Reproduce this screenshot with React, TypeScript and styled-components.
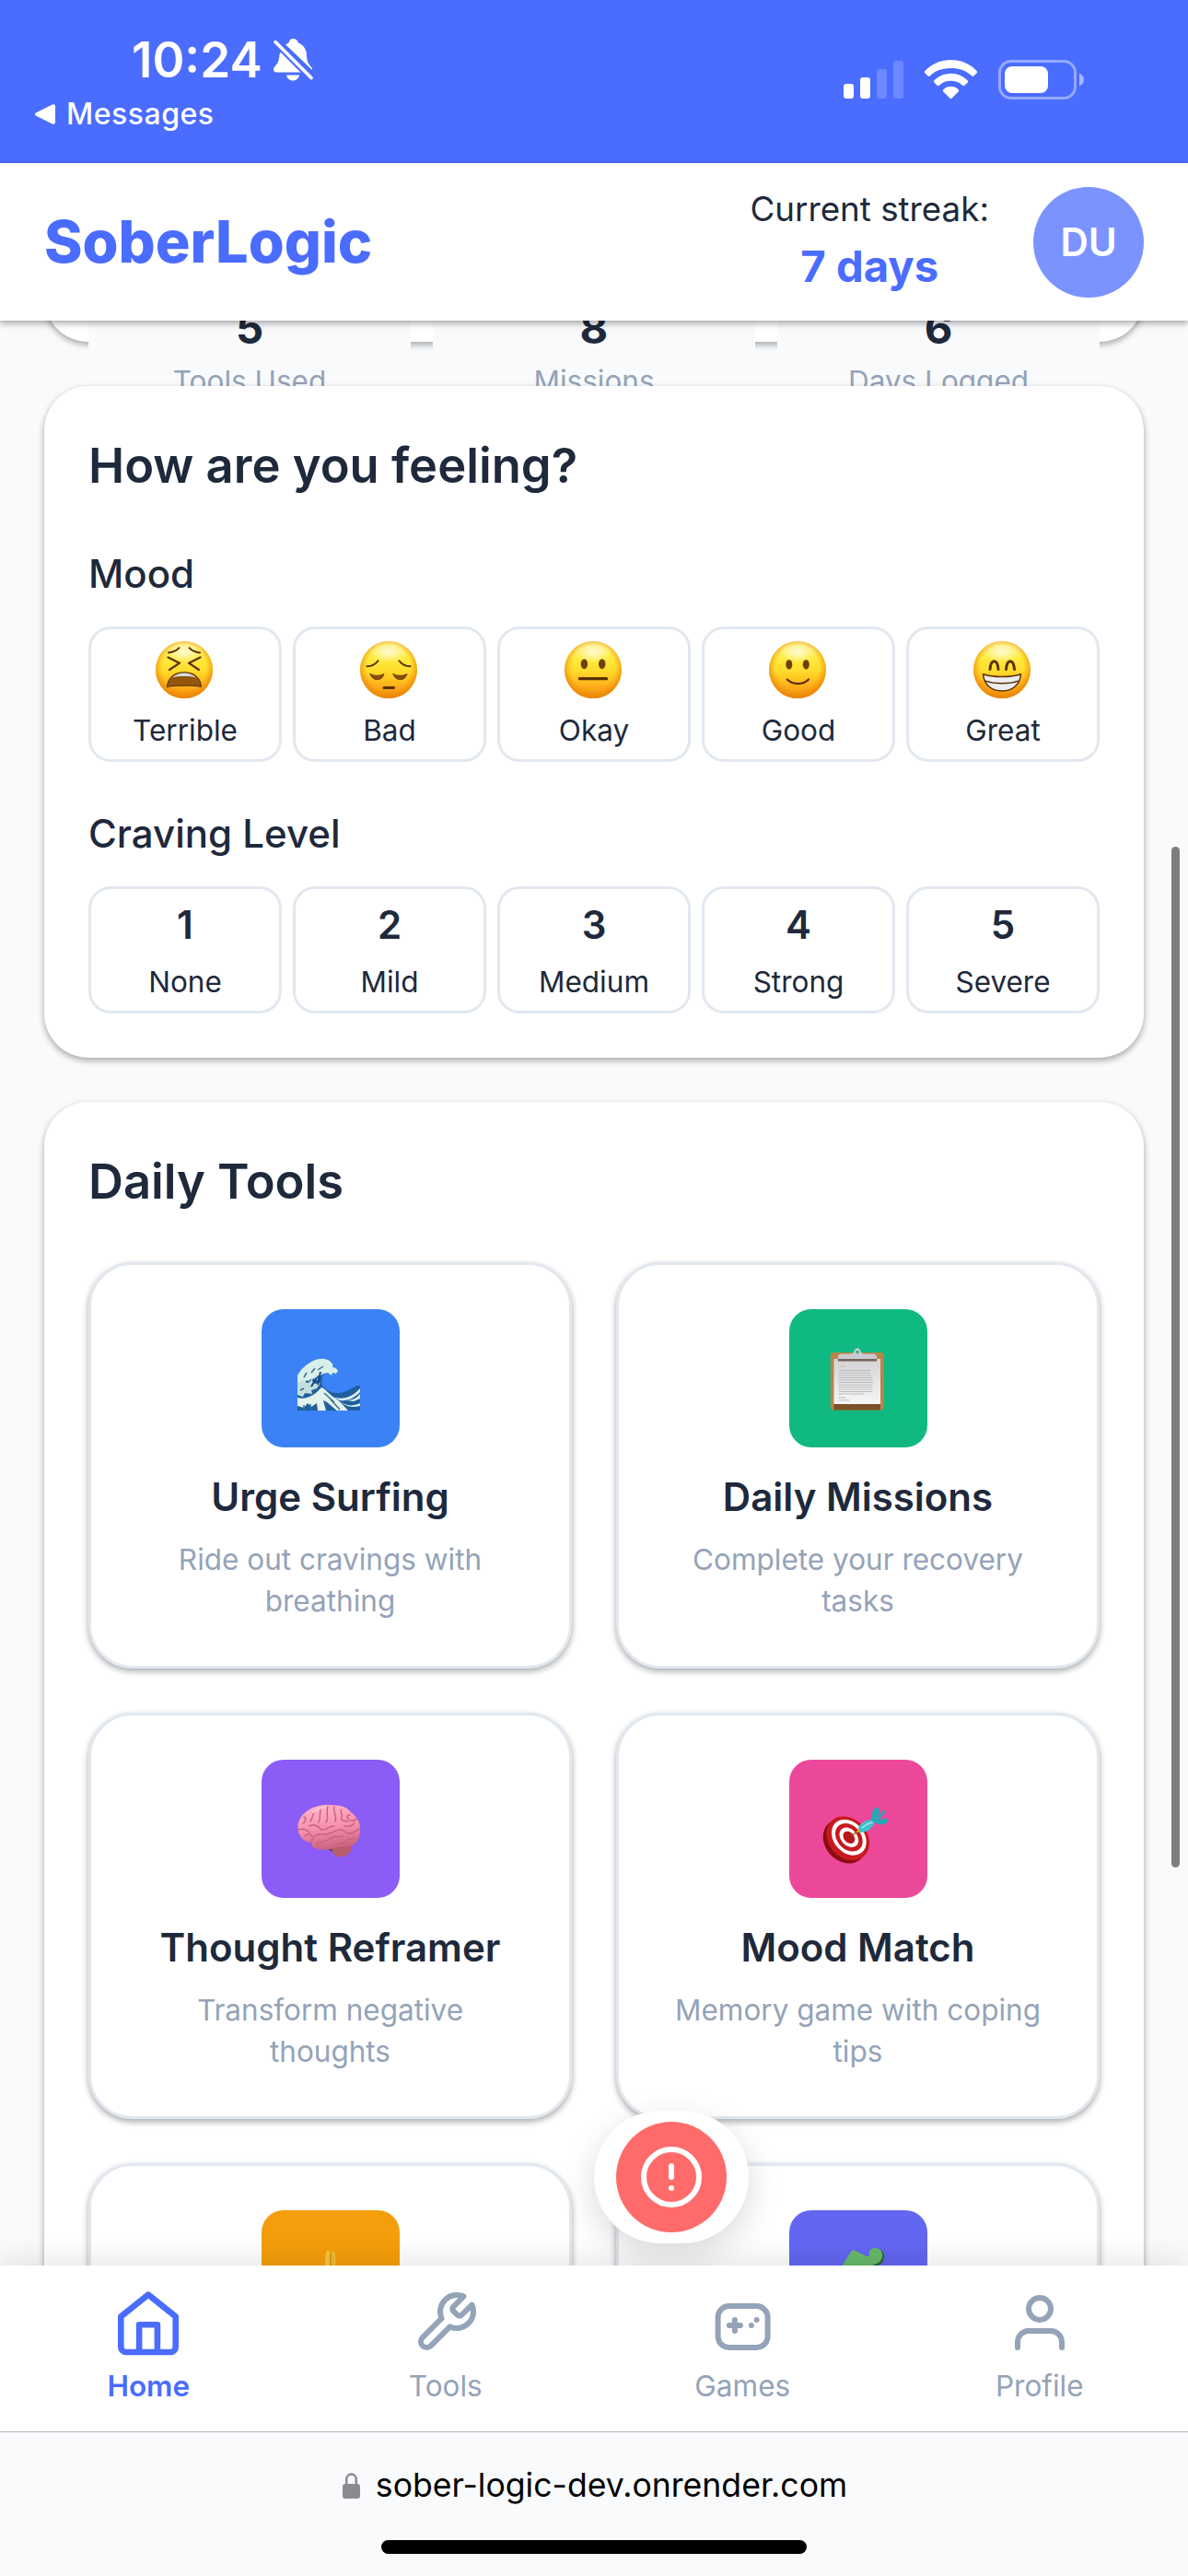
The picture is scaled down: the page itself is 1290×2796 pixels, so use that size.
import React from "react";
import styled, { createGlobalStyle } from "styled-components";
import { CircleAlert } from "lucide-react";

const ink = "#1e293b";
const muted = "#94a3b8";
const primary = "#4a6cff";
const line = "#e2e8f0";
const page = "#f8fafc";
const lift = "0 3px 9px rgba(0,0,0,0.12), 0 3px 6px rgba(0,0,0,0.24)";

const GlobalStyle = createGlobalStyle`
  * { box-sizing: border-box; }
  body { margin: 0; background: ${page}; }
`;

const Screen = styled.div`
  width: 1290px;
  height: 2796px;
  display: flex;
  flex-direction: column;
  overflow: hidden;
  position: relative;
  background: ${page};
  color: ${ink};
  font-family: Inter, "Liberation Sans", sans-serif;
`;

/* ---------- system status bar ---------- */

const StatusBar = styled.div`
  height: 177px;
  flex: none;
  display: flex;
  justify-content: space-between;
  background: ${primary};
  color: #fff;
`;

const StatusLeft = styled.div`
  padding: 33px 0 0 38px;
`;

const ClockRow = styled.div`
  display: flex;
  align-items: center;
  gap: 12px;
  height: 64px;
  padding-left: 105px;
`;

const Clock = styled.span`
  font-size: 53px;
  font-weight: 600;
  line-height: 64px;
`;

const BackRow = styled.div`
  display: flex;
  align-items: center;
  gap: 11px;
  height: 40px;
  margin-top: 7px;
  font-size: 32px;
  font-weight: 500;
  line-height: 40px;
  letter-spacing: 0.5px;
`;

const StatusRight = styled.div`
  display: flex;
  align-items: flex-start;
  padding: 65px 113px 0 0;
`;

/* ---------- app header ---------- */

const Header = styled.header`
  height: 171px;
  flex: none;
  position: relative;
  z-index: 2;
  display: flex;
  align-items: center;
  padding: 0 48px;
  background: #fff;
  box-shadow: ${lift};
`;

const Brand = styled.h1`
  margin: 0 auto 0 0;
  padding-bottom: 1px;
  color: ${primary};
  font-size: 63px;
  line-height: 80px;
  font-weight: 800;
`;

const Streak = styled.div`
  display: flex;
  flex-direction: column;
  align-items: center;
  margin-right: 48px;
  padding-bottom: 3px;
`;

const StreakLabel = styled.span`
  font-size: 36.75px;
  line-height: 56px;
`;

const StreakValue = styled.span`
  color: ${primary};
  font-size: 47.25px;
  font-weight: 700;
  line-height: 68px;
`;

const Avatar = styled.div`
  width: 120px;
  height: 120px;
  border-radius: 50%;
  display: grid;
  place-items: center;
  background: #7b93ff;
  color: #fff;
  font-size: 42px;
  font-weight: 600;
`;

/* ---------- scrolling content ---------- */

const Main = styled.main`
  flex: 1;
  min-height: 0;
  overflow: hidden;
  display: flex;
  flex-direction: column;
  gap: 48px;
  padding: 0 48px;
`;

const Card = styled.section`
  flex: none;
  padding: 48px;
  border-radius: 48px;
  background: #fff;
  box-shadow: ${lift};
`;

const StatsCard = styled(Card)`
  height: 240px;
  margin-top: -217px;
  display: grid;
  grid-template-columns: repeat(3, 1fr);
  gap: 24px;
`;

const Stat = styled.div`
  height: 300px;
  padding-top: 144px;
  display: flex;
  flex-direction: column;
  align-items: center;
  background: ${page};
`;

const StatNumber = styled.span`
  font-size: 47.25px;
  font-weight: 700;
  line-height: 66px;
`;

const StatLabel = styled.span`
  margin-top: 2px;
  color: ${muted};
  font-size: 31.5px;
  line-height: 46px;
`;

const CardTitle = styled.h2`
  margin: 0 0 49px;
  font-size: 52.5px;
  font-weight: 600;
  line-height: 77px;
`;

const FieldLabel = styled.h3<{ $spaced?: boolean }>`
  margin: ${(p) => (p.$spaced ? "48px" : "0")} 0 27px;
  font-size: 42px;
  font-weight: 500;
  line-height: 60px;
`;

const Options = styled.div`
  display: grid;
  grid-template-columns: repeat(5, 1fr);
  gap: 12px;
`;

const Option = styled.button<{ $height: number }>`
  height: ${(p) => p.$height}px;
  padding: 13px 0 0;
  border: 3px solid ${line};
  border-radius: 24px;
  display: flex;
  flex-direction: column;
  align-items: center;
  background: #fff;
  color: ${ink};
  font-family: inherit;
`;

const OptionNumber = styled.span`
  font-size: 42px;
  font-weight: 600;
  line-height: 52px;
`;

const OptionLabel = styled.span<{ $gap: number }>`
  margin-top: ${(p) => p.$gap}px;
  font-size: 31.5px;
  line-height: 45px;
`;

const ToolGrid = styled.div`
  display: grid;
  grid-template-columns: repeat(2, 1fr);
  gap: 48px;
`;

const ToolCard = styled.article`
  height: 441px;
  padding: 48px;
  border: 3px solid ${line};
  border-radius: 48px;
  display: flex;
  flex-direction: column;
  align-items: center;
  background: #fff;
  box-shadow: ${lift};
  text-align: center;
`;

const ToolTile = styled.div<{ $color: string }>`
  width: 150px;
  height: 150px;
  flex: none;
  border-radius: 24px;
  background: ${(p) => p.$color};
`;

const ToolName = styled.h4`
  margin: 24px 0 15px;
  font-size: 42px;
  font-weight: 600;
  line-height: 60px;
  white-space: nowrap;
`;

const ToolText = styled.p`
  margin: 0;
  color: ${muted};
  font-size: 31.5px;
  line-height: 45px;
`;

/* ---------- overlays ---------- */

const ScrollThumb = styled.div`
  position: absolute;
  top: 919px;
  right: 9px;
  z-index: 3;
  width: 9px;
  height: 1108px;
  border-radius: 5px;
  background: #7d7e80;
`;

const SosDock = styled.div`
  position: absolute;
  left: 50%;
  top: 2291px;
  z-index: 1;
  padding: 12px 24px;
  border-radius: 72px;
  background: #fff;
  box-shadow: 0 12px 36px rgba(0, 0, 0, 0.15);
`;

const SosButton = styled.button`
  width: 120px;
  height: 120px;
  padding: 0;
  border: 0;
  border-radius: 50%;
  display: grid;
  place-items: center;
  background: #ff6b6b;
  color: #fff;
`;

/* ---------- bottom bars ---------- */

const TabBar = styled.nav`
  height: 180px;
  flex: none;
  position: relative;
  z-index: 2;
  display: grid;
  grid-template-columns: repeat(4, 1fr);
  background: #fff;
  box-shadow: 0 -6px 30px rgba(0, 0, 0, 0.1);
`;

const Tab = styled.a<{ $active?: boolean }>`
  display: flex;
  flex-direction: column;
  align-items: center;
  padding-top: 26px;
  color: ${(p) => (p.$active ? primary : muted)};
  font-size: 31.5px;
  line-height: 44px;
  font-weight: ${(p) => (p.$active ? 600 : 400)};

  svg {
    width: 72px;
    height: 72px;
    margin-bottom: 11px;
    overflow: visible;
    transform: ${(p) => (p.$active ? "scale(1.1)" : "none")};
  }
`;

const BrowserBar = styled.footer`
  height: 157px;
  flex: none;
  position: relative;
  z-index: 2;
  display: flex;
  flex-direction: column;
  align-items: center;
  border-top: 1px solid #b9bcc1;
  background: ${page};
`;

const Address = styled.div`
  display: flex;
  align-items: center;
  gap: 17px;
  height: 50px;
  margin-top: 33px;
  padding-left: 2px;
  color: #000;
  font-size: 35.6px;
  line-height: 50px;
`;

const HomeIndicator = styled.div`
  width: 462px;
  height: 15px;
  margin-top: 34px;
  border-radius: 8px;
  background: #000;
`;

/* ---------- status drawings ---------- */

const BellOff = () => (
  <svg width="43" height="46" viewBox="0 0 43 46" fill="#fff">
    <path d="M21 0c3.600 0 5.600 2.300 6 4.600 5.600 2.200 8.800 7.200 9 13.400.2 6.200 1.600 9.400 4.800 12.500 1 1 1.200 2 1.200 3.400L13.200 6.600c1.100-.9 2.300-1.500 3.400-2C17 2.300 18 0 21 0z" />
    <path d="M7.600 14.500L29.500 36.500H3.200C1.200 36.500 0 35.200 0 33.600c0-2.300 1.500-3.100 3.200-5.600 2.300-3.200 2.800-5.900 3.200-10 .1-1.300.5-2.400 1.200-3.500z" />
    <path d="M14 39.500h14c-.6 3.500-3.300 6-7 6s-6.400-2.500-7-6z" />
    <path d="M2 3.600L41 42.500" stroke={primary} strokeWidth="7" />
    <path d="M2 3.600L41 42.500" stroke="#fff" strokeWidth="3.600" strokeLinecap="round" />
  </svg>
);

const BackArrow = () => (
  <svg width="23" height="22" viewBox="0 0 23 22" fill="#fff">
    <path d="M1.200 9.300L18.800.6c1.700-.8 3.200 0 3.200 1.900v17c0 1.900-1.500 2.700-3.200 1.900L1.200 12.700c-1.600-.8-1.600-2.600 0-3.400z" />
  </svg>
);

const StatusIcons = () => (
  <svg width="261" height="43" viewBox="0 0 261 43" fill="#fff">
    <rect x="0" y="26" width="11" height="16" rx="3" />
    <rect x="18" y="19" width="11" height="23" rx="3" />
    <rect x="36" y="10" width="11" height="32" rx="3" opacity=".2" />
    <rect x="54" y="1" width="11" height="41" rx="3" opacity=".2" />
    <path d="M88.300 12.200C95 4.500 105.200 0 116.500 0s21.500 4.500 28.200 12.200c.6.700.5 1.400 0 2l-3.300 3.300c-.7.700-1.500.6-2.100 0C133.500 11.600 125.500 9 116.500 9s-17 2.600-22.800 8.500c-.6.600-1.400.7-2.100 0l-3.300-3.300c-.5-.6-.6-1.300 0-2z" />
    <path d="M98.300 22.500C103 17.500 109.200 14.700 116.500 14.700s13.500 2.800 18.200 7.800c.6.700.5 1.400 0 2l-3.400 3.300c-.7.700-1.400.6-2.100 0-3.500-3.200-7.500-5-12.700-5s-9.200 1.800-12.700 5c-.7.600-1.400.7-2.100 0l-3.400-3.300c-.5-.6-.6-1.300 0-2z" />
    <path d="M108.300 32.300c2-2.100 4.800-3.500 8.200-3.500s6.200 1.400 8.200 3.500c.6.700.6 1.400 0 2.100l-7.100 7.200c-.7.700-1.500.7-2.200 0l-7.100-7.200c-.6-.7-.6-1.400 0-2.100z" />
    <rect x="169.500" y="1.500" width="82" height="40" rx="12.500" fill="none" stroke="#fff" strokeWidth="3" opacity=".42" />
    <rect x="175" y="7" width="47" height="29" rx="8" />
    <path d="M256 14.500c3 1.200 5 4 5 7s-2 5.800-5 7z" opacity=".5" />
  </svg>
);

const Lock = () => (
  <svg width="19" height="28" viewBox="0 0 19 28">
    <path d="M4.200 13V7.500C4.200 4 6.300 1.600 9.500 1.600s5.300 2.400 5.300 5.900V13" fill="none" stroke="#8a8a8f" strokeWidth="2.500" />
    <rect x="0" y="12" width="19" height="16" rx="3" fill="#8a8a8f" />
  </svg>
);

/* ---------- mood faces ---------- */

type Mood = "Terrible" | "Bad" | "Okay" | "Good" | "Great";

const brown = "#5b2f04";

const features: Record<Mood, React.ReactNode> = {
  Terrible: (
    <>
      <path d="M14 12.500C18.500 12 23 10 25.500 7.200M48 12.500C43.500 12 39 10 36.500 7.200" strokeWidth="2" />
      <path d="M13.500 17.500L26 23.700 15 31M48.500 17.500L36 23.700 47 31" strokeWidth="2.200" />
      <path d="M12.500 49.500C13 39.500 20 33.700 31 33.700s18 5.800 18.500 15.800C43 47.700 19 47.700 12.500 49.500z" fill="#93560b" strokeWidth="1" />
      <path d="M18 39.500C21.500 36.300 26 34.600 31 34.600s9.500 1.700 13 4.900C37 37.600 25 37.600 18 39.500z" fill="#d5d9de" stroke="none" />
    </>
  ),
  Bad: (
    <>
      <path d="M7.500 27.300C12.500 27 17 24.800 19.500 21.200M54.500 27.300C49.500 27 45 24.800 42.500 21.200" strokeWidth="2" />
      <path d="M11 35.500c4.500 2.500 10.500 2.500 15 0-1.500 4.500-4 6-7.500 6s-6.200-1.700-7.500-6zM36 35.500c4.500 2.500 10.500 2.500 15 0-1.500 4.500-4 6-7.500 6s-6.200-1.700-7.500-6z" fill="#8a4e08" strokeWidth=".8" />
      <path d="M26 50.500h10.500" strokeWidth="3.200" />
    </>
  ),
  Okay: (
    <>
      <g fill="#70400a" stroke="none">
        <ellipse cx="21.400" cy="24.700" rx="3.700" ry="5.500" />
        <ellipse cx="40.700" cy="24.700" rx="3.700" ry="5.500" />
      </g>
      <path d="M16.500 40.700h29" strokeWidth="3.200" />
    </>
  ),
  Good: (
    <>
      <g fill="#70400a" stroke="none">
        <ellipse cx="21.800" cy="25.300" rx="3.500" ry="5.300" />
        <ellipse cx="40.300" cy="25.300" rx="3.500" ry="5.300" />
      </g>
      <path d="M19.800 41.500C26 47.600 37 47.600 43 41.500" strokeWidth="2.300" />
    </>
  ),
  Great: (
    <>
      <path d="M18 30.500c.5-6 2.300-8.800 4.500-8.800s4 2.800 4.500 8.800M35.500 30.500c.5-6 2.300-8.800 4.500-8.800s4 2.800 4.500 8.800" strokeWidth="3" />
      <path d="M10.500 35.800C21 39.500 41 39.500 51.500 35.800 50.500 47.500 42 54 31 54s-19.500-6.500-20.500-18.200z" fill="#eceef1" strokeWidth="1.500" />
      <path d="M13.200 43.200C23 46.600 39 46.600 48.800 43.200" strokeWidth="1.300" />
    </>
  ),
};

const FaceSvg = styled.svg`
  width: 62px;
  height: 62px;
  flex: none;
  margin-right: 2px;
`;

const Face = ({ mood }: { mood: Mood }) => (
  <FaceSvg viewBox="0 0 62 62">
    <defs>
      <linearGradient id={`skin-${mood}`} x1="0" y1="0" x2="0" y2="1">
        <stop offset="0" stopColor="#fff08a" />
        <stop offset=".28" stopColor="#ffec42" />
        <stop offset=".52" stopColor="#ffdc2b" />
        <stop offset=".78" stopColor="#ffb01c" />
        <stop offset="1" stopColor="#ee8c0c" />
      </linearGradient>
      <radialGradient id={`rim-${mood}`} cx=".5" cy=".46" r=".54">
        <stop offset=".7" stopColor="#f59a0c" stopOpacity="0" />
        <stop offset="1" stopColor="#e98204" stopOpacity=".95" />
      </radialGradient>
      <radialGradient id={`glow-${mood}`} cx=".5" cy=".5" r=".5">
        <stop offset="0" stopColor="#fffde6" stopOpacity=".9" />
        <stop offset="1" stopColor="#fffde6" stopOpacity="0" />
      </radialGradient>
    </defs>
    <circle cx="31" cy="31" r="31" fill={`url(#skin-${mood})`} />
    <circle cx="31" cy="31" r="31" fill={`url(#rim-${mood})`} />
    <ellipse cx="31" cy="12" rx="20" ry="11" fill={`url(#glow-${mood})`} />
    <g fill="none" stroke={brown} strokeLinecap="round" strokeLinejoin="round">
      {features[mood]}
    </g>
  </FaceSvg>
);

/* ---------- tool tile drawings ---------- */

const Wave = () => (
  <svg viewBox="0 0 150 150">
    <path d="M39 110V72c4-8 11-13 17-16 6-3 15-3 19 1 2 2 3 4 2 6 3 0 5 2 6 4l-2 3-4-1-1 3-4-3-4 1c-3 3-3 8-2 13 8 9 18 10 28 5 5-2 9-6 13-5v27z" fill="#1f5f9f" />
    <path d="M39 72c4-8 11-13 17-16 6-3 15-3 19 1 2 2 3 4 2 6 3 0 5 2 6 4l-2 3-4-1-1 3-4-3-5 1-4 3-3-1 1 5-5-2-2 5-5-3-4 5-6-2z" fill="#d9efea" />
    <path d="M39 80l6-3 4 3 5-3 4 4 6-1-4 6-6 2 1 4-8-1-2 4-6-2z" fill="#c3e0df" />
    <path d="M39 96c8 2 15-1 21-6l5-5c4 1 8 7 14 11 6 3 10 9 15 14H82c-6-4-9-9-15-11l3 11h-9l-1-8-6 4-4-4-4 5-7-2z" fill="#e2f2ec" />
    <path d="M78 95c9 4 20 1 29-9v4c-7 7-14 10-22 9zM84 99c7 6 14 7 23 3v3c-8 2-13 1-18-2zM107 92c-5 6-10 7-15 7l8 1 7-3z" fill="#dceff0" />
    <path d="M46 74l3-5M54 69l4-5M61 66l6-4M50 80l4-4M42 88l4-2M46 104v6M53 103v7M75 98l10 11M68 91l11 10" stroke="#396f91" strokeWidth="1.500" />
    <path d="M64 68l-3 14M60 74l-6 10" stroke="#164a86" strokeWidth="2" />
  </svg>
);

const Clipboard = () => (
  <svg viewBox="0 0 150 150">
    <defs>
      <linearGradient id="sheet" x1="0" y1="0" x2="0" y2="1">
        <stop offset="0" stopColor="#d4d4d6" />
        <stop offset="1" stopColor="#f6f6f7" />
      </linearGradient>
    </defs>
    <rect x="44.800" y="47" width="58" height="62.500" rx="3.500" fill="#b9854a" />
    <path d="M48.500 102h50.500v7.500H48.500z" fill="#7a5128" />
    <rect x="48.500" y="54" width="50.500" height="49" fill="url(#sheet)" />
    <path d="M53 54h42v2.500H53z" fill="#77615a" />
    <path d="M53 54v-2c0-2 1.500-3.500 3.500-3.500H67c2 0 3-1.500 3.500-3 .6-2 2-3.300 3.500-3.300s2.900 1.300 3.500 3.300c.5 1.500 1.500 3 3.500 3h10.500c2 0 3.500 1.500 3.500 3.500v2z" fill="#c9cbd0" />
    <circle cx="74" cy="46.500" r="1.700" fill="#10b981" />
    <path d="M53.500 62H61M53.500 66.500H88M53.500 69.200h34.500M53.500 72h35.500M53.500 74.500h37M53.500 77h37M53.500 79.500h38M53.500 82h37M53.500 84.500h37M53.500 87h36M53.500 89.500h37M53.500 92h28M53.500 96H61M53.500 98.800h12" stroke="#bcbcbf" strokeWidth="1" />
  </svg>
);

const Brain = () => (
  <svg viewBox="0 0 150 150">
    <defs>
      <linearGradient id="cortex" x1=".4" y1="0" x2=".6" y2="1">
        <stop offset="0" stopColor="#ffb4c8" />
        <stop offset=".5" stopColor="#f591ac" />
        <stop offset="1" stopColor="#c65f7b" />
      </linearGradient>
    </defs>
    <path d="M65 93l14 8c3-1 4-5 4-8z" fill="#6a3440" />
    <path d="M76 96c3-4 20-5 22-1 0 5-6 10.500-13 10.500-5 0-8-5-9-9.500z" fill="#b75d6b" />
    <path d="M39.500 76c-1-8 3-16 11-21 8-6 20-7 30-5.500 8 0 13 3 17 8 6 4 10 11 9.500 19-.5 8-3 15-10 17.500-7 1.500-12-.5-18 2-7 2-15 2-21 0-3-1-4-4-4-6-6 0-13-5-14.500-14z" fill="url(#cortex)" />
    <g fill="none" stroke="#cb5f83" strokeWidth="1.400" strokeLinecap="round">
      <path d="M54 90c1-7 6-10 13-9 8 1 11-5 18-5 6 0 6 5 12 4 5-1 6-4 9-5" />
      <path d="M58 55c-3 5-2 8-5 12M65 52c-3 5 0 10-3 16M72 51c-3 6 2 11-2 17M79 51c-2 4 3 9 1 16M87 54c-3 2 2 6 0 9s4 4 7 4M96 60c-4 0-4 3-1 5s6 2 8-1M46 62c3 1 2 5-1 7M40 76c5-2 9 0 12 3M47 83c2-3 6-3 8 0M52 72c4-2 9-1 12 3" />
      <path d="M60 91c6-3 11-2 16-6s8 1 12-2M80 93c4-4 9-1 12-5 3-3 7-1 10-3M90 72c5 1 8 0 11-3M64 76c6 1 9-4 15-4" />
    </g>
    <path d="M56 57c4-4 9-5 13-5" stroke="#ffc6d8" strokeWidth="2" fill="none" strokeLinecap="round" />
  </svg>
);

const Dart = () => (
  <svg viewBox="0 0 150 150">
    <g transform="rotate(48 63 86)">
      <ellipse cx="63" cy="90" rx="26" ry="21" fill="#8c0c11" />
      <ellipse cx="63" cy="85" rx="26" ry="21" fill="#c81a1f" />
      <ellipse cx="63" cy="83.500" rx="21.500" ry="16.500" fill="#fff" />
      <ellipse cx="63" cy="83.500" rx="17" ry="12.800" fill="#c81a1f" />
      <ellipse cx="63" cy="83.500" rx="12" ry="8.800" fill="#fff" />
      <ellipse cx="63" cy="83.500" rx="7.500" ry="5.400" fill="#b7161b" />
    </g>
    <path d="M67 83l10-7" stroke="#8a5a10" strokeWidth="1.400" />
    <path d="M73 79l2-5 4 4z" fill="#e0ac18" />
    <path d="M75 74c2-5 8-9 15-9l4-2 2 3-4 3c-2 6-8 10-15 10z" fill="#3fc0cc" />
    <path d="M89 66c-1-6 2-13 6-14.500 4 1 4 6 0 12l7-8c2-1 3 0 2 2l-7 8c5-2 10-2 10.500.5 0 3-5 5.500-11 4z" fill="#2aa7b5" />
    <path d="M79 74c3-3 7-5 11-6" stroke="#9ae6ec" strokeWidth="1.500" fill="none" strokeLinecap="round" />
  </svg>
);

const Palms = () => (
  <svg viewBox="0 0 150 150">
    <path d="M72 44c1.500 0 2.300 1 2.400 3l.4 63H55c0-16 8-30 13-42l1.700-21c.2-2 1-3 2.300-3z" fill="#f5c53c" />
    <path d="M77.600 44c-1.500 0-2.200 1-2.300 3l-.5 63H95c0-16-8-30-13-42l-2.100-21c-.2-2-1-3-2.300-3z" fill="#efb92f" />
    <path d="M74.800 47v60" stroke="#c98210" strokeWidth="1" />
  </svg>
);

const Puzzle = () => (
  <svg viewBox="0 0 150 150">
    <path d="M59 62l9-16c1-2 3-2 5-1l9 6c3 2 5 1 6-1-1-4 2-8 7-8 6 0 9 5 8 10-1 6-5 8-10 9l12 20-26 28-38-18 18-22z" fill="#2e6a3a" />
    <path d="M58 59l9-14c1-2 3-2 5-1l10 5c3 2 5 1 5-1-1-4 2-7 6-7 6 0 9 5 8 9-1 6-5 8-10 9l12 18-26 28-36-18 18-22z" fill="#66b96a" />
  </svg>
);

/* ---------- tab drawings ---------- */

const TabIcon = ({ children }: { children: React.ReactNode }) => (
  <svg viewBox="0 0 24 24" fill="none" stroke="currentColor" strokeWidth="2" strokeLinecap="round" strokeLinejoin="round">
    {children}
  </svg>
);

const tabs = [
  {
    label: "Home",
    active: true,
    icon: (
      <>
        <path d="M3 10l9-7.200 9 7.200v10a1.700 1.700 0 0 1-1.700 1.700H4.700A1.700 1.700 0 0 1 3 20z" />
        <path d="M9 21.700v-9h6v9" />
      </>
    ),
  },
  {
    label: "Tools",
    icon: (
      <path d="M14.700 6.300a1 1 0 0 0 0 1.400l1.600 1.600a1 1 0 0 0 1.400 0l3.770-3.770a6 6 0 0 1-7.940 7.940l-6.910 6.910a2.120 2.120 0 0 1-3-3l6.910-6.910a6 6 0 0 1 7.940-7.940l-3.760 3.760z" />
    ),
  },
  {
    label: "Games",
    icon: (
      <>
        <rect x="3.200" y="6" width="18" height="15" rx="4" />
        <path d="M9.300 11v4M7.300 13h4M15.300 13h.01M17.200 11h.01" />
      </>
    ),
  },
  {
    label: "Profile",
    icon: (
      <>
        <circle cx="12" cy="7" r="4" />
        <path d="M20 21v-2a4 4 0 0 0-4-4H8a4 4 0 0 0-4 4v2" />
      </>
    ),
  },
];

const stats = [
  { value: 5, label: "Tools Used" },
  { value: 8, label: "Missions" },
  { value: 6, label: "Days Logged" },
];

const moods: Mood[] = ["Terrible", "Bad", "Okay", "Good", "Great"];
const cravings = ["None", "Mild", "Medium", "Strong", "Severe"];

const tools = [
  { name: "Urge Surfing", text: "Ride out cravings with breathing", color: "#3b82f6", art: <Wave /> },
  { name: "Daily Missions", text: "Complete your recovery tasks", color: "#10b981", art: <Clipboard /> },
  { name: "Thought Reframer", text: "Transform negative thoughts", color: "#8b5cf6", art: <Brain /> },
  { name: "Mood Match", text: "Memory game with coping tips", color: "#ec4899", art: <Dart /> },
  { name: "", text: "", color: "#f59e0b", art: <Palms /> },
  { name: "", text: "", color: "#6366f1", art: <Puzzle /> },
];

export default function App() {
  return (
    <Screen>
      <GlobalStyle />
      <StatusBar>
        <StatusLeft>
          <ClockRow>
            <Clock>10:24</Clock>
            <BellOff />
          </ClockRow>
          <BackRow>
            <BackArrow />
            <span>Messages</span>
          </BackRow>
        </StatusLeft>
        <StatusRight>
          <StatusIcons />
        </StatusRight>
      </StatusBar>

      <Header>
        <Brand>SoberLogic</Brand>
        <Streak>
          <StreakLabel>Current streak:</StreakLabel>
          <StreakValue>7 days</StreakValue>
        </Streak>
        <Avatar>DU</Avatar>
      </Header>

      <Main>
        <StatsCard>
          {stats.map((s) => (
            <Stat key={s.label}>
              <StatNumber>{s.value}</StatNumber>
              <StatLabel>{s.label}</StatLabel>
            </Stat>
          ))}
        </StatsCard>

        <Card>
          <CardTitle>How are you feeling?</CardTitle>
          <FieldLabel>Mood</FieldLabel>
          <Options>
            {moods.map((m) => (
              <Option key={m} $height={147}>
                <Face mood={m} />
                <OptionLabel $gap={12}>{m}</OptionLabel>
              </Option>
            ))}
          </Options>
          <FieldLabel $spaced>Craving Level</FieldLabel>
          <Options>
            {cravings.map((c, i) => (
              <Option key={c} $height={138}>
                <OptionNumber>{i + 1}</OptionNumber>
                <OptionLabel $gap={13}>{c}</OptionLabel>
              </Option>
            ))}
          </Options>
        </Card>

        <Card>
          <CardTitle>Daily Tools</CardTitle>
          <ToolGrid>
            {tools.map((t) => (
              <ToolCard key={t.color}>
                <ToolTile $color={t.color}>{t.art}</ToolTile>
                <ToolName>{t.name}</ToolName>
                <ToolText>{t.text}</ToolText>
              </ToolCard>
            ))}
          </ToolGrid>
        </Card>
      </Main>

      <SosDock>
        <SosButton aria-label="Emergency help">
          <CircleAlert size={72} strokeWidth={2} />
        </SosButton>
      </SosDock>
      <ScrollThumb />

      <TabBar>
        {tabs.map((t) => (
          <Tab key={t.label} $active={t.active}>
            <TabIcon>{t.icon}</TabIcon>
            {t.label}
          </Tab>
        ))}
      </TabBar>

      <BrowserBar>
        <Address>
          <Lock />
          <span>sober-logic-dev.onrender.com</span>
        </Address>
        <HomeIndicator />
      </BrowserBar>
    </Screen>
  );
}
